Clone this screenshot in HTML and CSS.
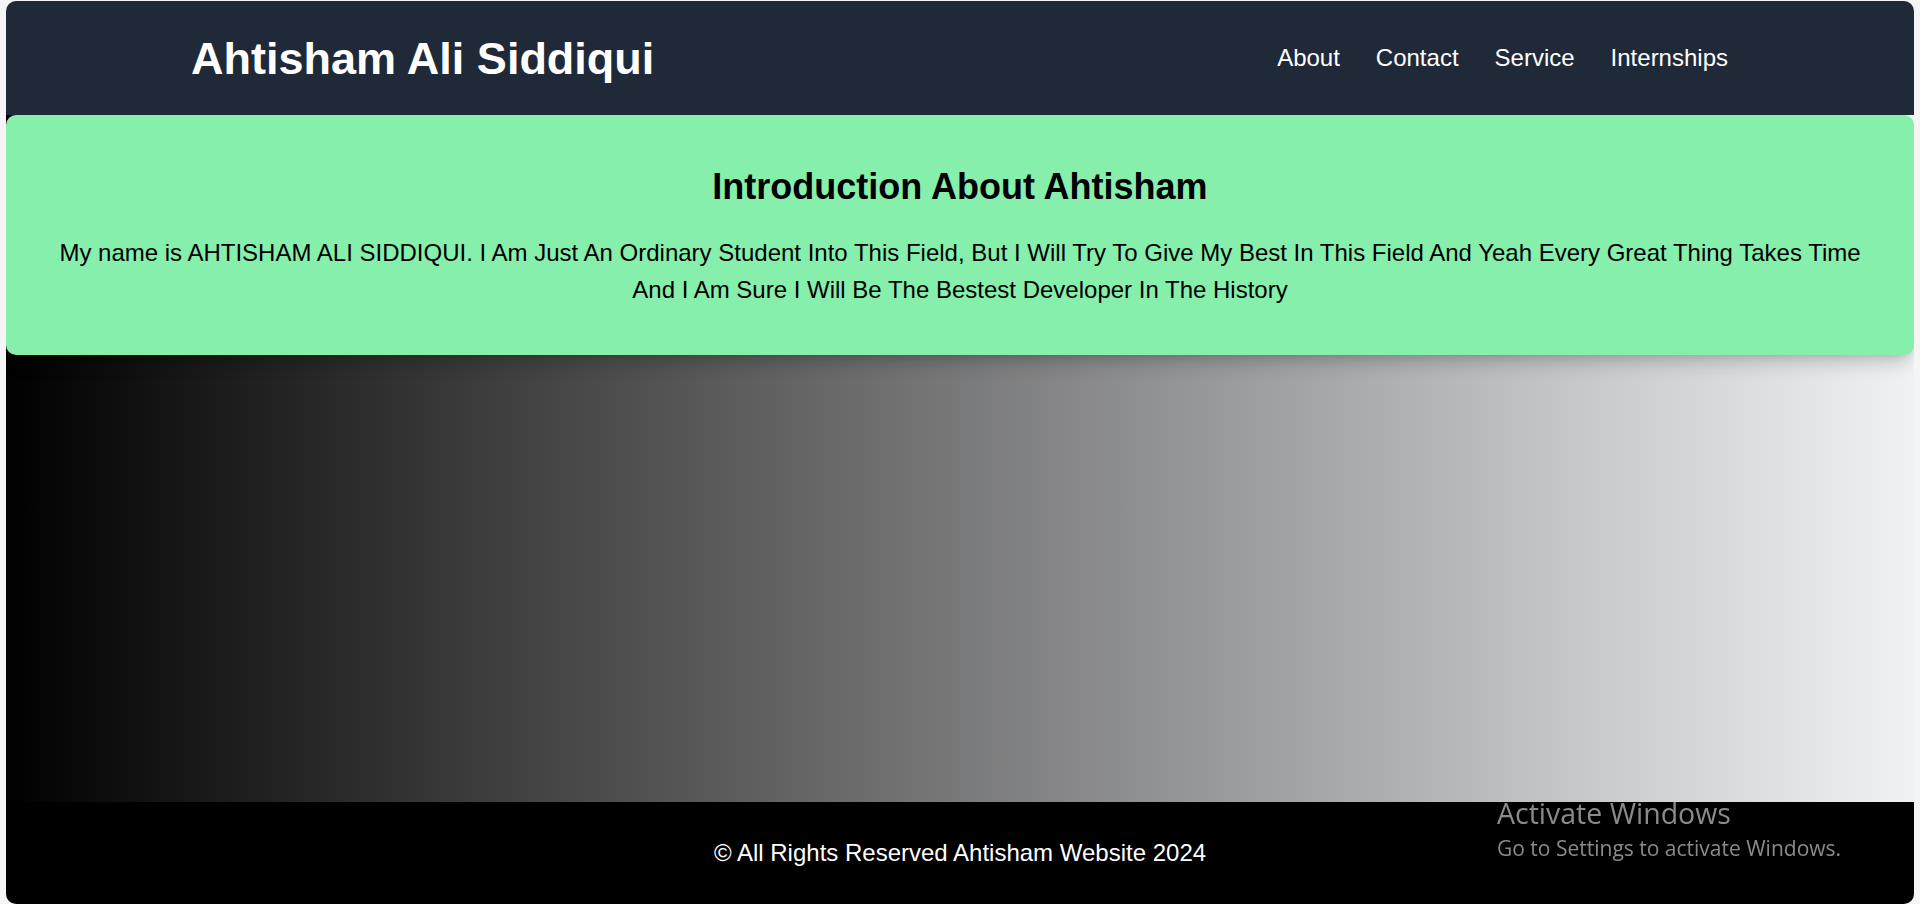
FILE: index.html
```html
<!DOCTYPE html>
<html lang="en">
<head>
<meta charset="utf-8">
<title>Ahtisham Ali Siddiqui</title>
<link rel="stylesheet" href="styles.css">
</head>
<body>
<div class="frame">
  <header class="topbar">
    <h1 class="brand">Ahtisham Ali Siddiqui</h1>
    <nav class="nav">
      <a href="#">About</a>
      <a href="#">Contact</a>
      <a href="#">Service</a>
      <a href="#">Internships</a>
    </nav>
  </header>
  <main class="hero">
    <section class="intro">
      <h2 class="intro-title">Introduction About Ahtisham</h2>
      <p class="intro-text">My name is AHTISHAM ALI SIDDIQUI. I Am Just An Ordinary Student Into This Field, But I Will Try To Give My Best In This Field And Yeah Every Great Thing Takes Time And I Am Sure I Will Be The Bestest Developer In The History</p>
    </section>
  </main>
  <footer class="footer">
    <p>© All Rights Reserved Ahtisham Website 2024</p>
  </footer>
</div>
<div class="watermark">
  <div class="wm-title">Activate Windows</div>
  <div class="wm-sub">Go to Settings to activate Windows.</div>
</div>
</body>
</html>
```
FILE: styles.css
```css
* { box-sizing: border-box; }
html, body { margin: 0; padding: 0; }
body {
  background: #f5f5f5;
  font-family: "Liberation Sans", Arial, sans-serif;
  padding: 1px 6px 0 6px;
  height: 904px;
  overflow: hidden;
}
.frame {
  display: flex;
  flex-direction: column;
  height: 903px;
  border-radius: 10px;
  overflow: hidden;
}
.topbar {
  height: 114px;
  flex: none;
  background: #1f2937;
  display: flex;
  align-items: center;
  justify-content: space-between;
  padding: 0 186px 0 185px;
  color: #fff;
}
.brand {
  margin: 0;
  font-size: 45px;
  font-weight: 700;
  line-height: 1;
}
.nav {
  display: flex;
  gap: 36px;
}
.nav a {
  color: #fff;
  text-decoration: none;
  font-size: 24px;
}
.hero {
  flex: 1;
  background: linear-gradient(to right, #000000, #f1f2f4);
}
.intro {
  background: #86efac;
  border-radius: 10px;
  height: 240px;
  padding: 52px 40px 0;
  text-align: center;
  box-shadow: 0 12px 18px -4px rgba(0,0,0,0.18), 0 4px 8px -4px rgba(0,0,0,0.12);
}
.intro-title {
  margin: 0;
  font-size: 36px;
  line-height: 40px;
  font-weight: 700;
  color: #000;
}
.intro-text {
  margin: 27px 0 0;
  font-size: 24px;
  line-height: 37px;
  color: #000;
}
.footer {
  height: 102px;
  flex: none;
  background: #000;
  display: flex;
  align-items: center;
  justify-content: center;
}
.footer p {
  margin: 0;
  color: #fff;
  font-size: 24px;
}
.watermark {
  position: fixed;
  left: 1497px;
  top: 795px;
  color: #8a8a8a;
  font-family: "Open Sans", "Noto Sans", sans-serif;
}
.wm-title { font-size: 28.5px; line-height: 37px; }
.wm-sub { font-size: 21px; line-height: 32px; }
```
